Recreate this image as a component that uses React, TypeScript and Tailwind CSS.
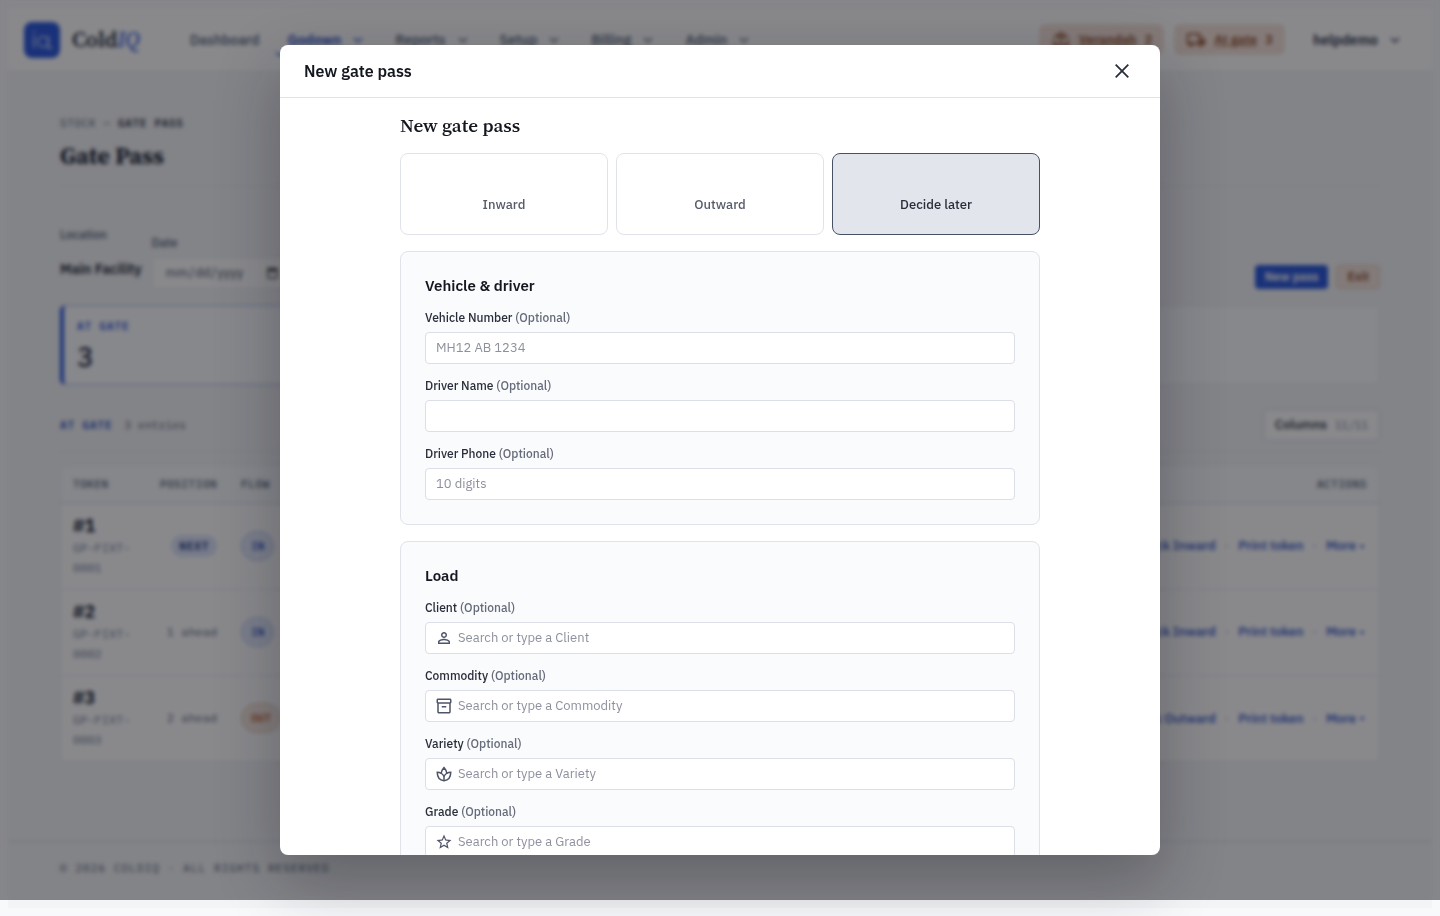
import type { ReactNode } from 'react';
import {
  MdKeyboardArrowDown,
  MdOutlineDeck,
  MdOutlineInventory2,
  MdOutlineLocalShipping,
  MdPersonOutline,
  MdStarBorder,
} from 'react-icons/md';

type Icon = (props: { className?: string }) => ReactNode;

const NAV = [
  { label: 'Dashboard' },
  { label: 'Godown', menu: true, active: true },
  { label: 'Reports', menu: true },
  { label: 'Setup', menu: true },
  { label: 'Billing', menu: true },
  { label: 'Admin', menu: true },
];

const ROWS = [
  { token: '#1', code: 'GP-FIXT-0001', position: 'NEXT', flow: 'IN' },
  { token: '#2', code: 'GP-FIXT-0002', position: '1 ahead', flow: 'IN' },
  { token: '#3', code: 'GP-FIXT-0003', position: '2 ahead', flow: 'OUT' },
];

const FLOWS = ['Inward', 'Outward', 'Decide later'];

const SERIF = "font-['Source_Serif_4','Liberation_Serif',serif]";
const MONO = "font-['IBM_Plex_Mono','Liberation_Mono',monospace]";

function LeafIcon({ className }: { className?: string }) {
  return (
    <svg viewBox="0 0 24 24" fill="none" stroke="currentColor" strokeWidth="2" strokeLinejoin="miter" className={className}>
      <path d="M12 3.500C9.800 5.800 8.600 8.300 8.300 11C9.800 12 11 13.200 12 15C13 13.200 14.200 12 15.700 11C15.400 8.300 14.200 5.800 12 3.500Z" />
      <path d="M8.300 11C6.700 10.100 5 9.700 3 9.600C3 15.600 6.200 20.200 12 21C17.800 20.200 21 15.600 21 9.600C19 9.700 17.300 10.100 15.700 11" />
      <path d="M12 14.500V21" />
    </svg>
  );
}

function NavBar() {
  return (
    <header className="flex h-16 items-center border-b border-slate-200 bg-white px-4">
      <a href="#home" className="flex items-center gap-3">
        <span className="flex size-9 items-center justify-center rounded-lg bg-[#1f4fd8]">
          <svg viewBox="0 0 24 24" className="size-7" fill="none" stroke="#c7d6fb" strokeWidth="1.3">
            <path d="M5 8v11M5 4v2" />
            <circle cx="13" cy="13.5" r="4.5" />
            <path d="M17.500 9v10H21" />
          </svg>
        </span>
        <span className={`${SERIF} text-[22px] font-semibold text-slate-900`}>
          Cold<em className="font-medium text-[#1f4fd8]">IQ</em>
        </span>
      </a>
      <nav className="ml-[38px] flex gap-1 text-sm font-medium">
        {NAV.map((item) => (
          <a
            key={item.label}
            href={`#${item.label.toLowerCase()}`}
            className={`flex items-center gap-2 rounded-md border-b-2 px-3 pt-1.5 pb-1 ${
              item.active ? 'border-[#1f4fd8] font-semibold text-[#1c47c0]' : 'border-transparent text-slate-600'
            }`}
          >
            {item.label}
            {item.menu && <MdKeyboardArrowDown className="size-[18px]" />}
          </a>
        ))}
      </nav>
      <div className="ml-auto flex items-center gap-[10px] text-[13px] font-semibold">
        <HeaderChip icon={MdOutlineDeck} label="Verandah" count={2} />
        <HeaderChip icon={MdOutlineLocalShipping} label="At gate" count={3} />
        <button className="flex items-center gap-2 pr-3 pl-[18px] text-sm text-slate-800">
          helpdemo
          <MdKeyboardArrowDown className="size-[18px]" />
        </button>
      </div>
    </header>
  );
}

function HeaderChip({ icon: Icon, label, count }: { icon: Icon; label: string; count: number }) {
  return (
    <a
      href={`#${label.toLowerCase()}`}
      className="flex h-[31px] items-center gap-2 rounded-md bg-[#f5e2d8] px-3 text-[#8a4520]"
    >
      <Icon className="size-5" />
      <span className="underline">{label}</span>
      <span>{count}</span>
    </a>
  );
}

function Toolbar() {
  return (
    <div className="flex items-end gap-[10px] pt-10">
      <div className="pb-[10px]">
        <div className="text-xs leading-4 font-medium text-slate-600">Location</div>
        <div className="mt-4 text-sm leading-5 font-semibold text-slate-900">Main Facility</div>
      </div>
      <div>
        <label htmlFor="date" className="block text-xs leading-4 font-medium text-slate-600">
          Date
        </label>
        <input
          id="date"
          type="date"
          className="mt-[6px] h-8 w-[142px] rounded border border-slate-200 bg-white px-3 text-[13px] text-slate-700"
        />
      </div>
      <div className="ml-auto flex gap-2 text-xs font-semibold">
        <button className="h-6 rounded bg-[#1f4fd8] px-[10px] text-white">New pass</button>
        <button className="h-6 rounded border border-[#dfc0ad] bg-[#f3e3da] px-[10px] text-[#8a4520]">Exit</button>
      </div>
    </div>
  );
}

function GateTable() {
  return (
    <div className="mt-3 overflow-hidden rounded-md border border-slate-200 bg-white">
      <table className="w-full">
        <thead>
          <tr className={`${MONO} h-[38px] border-b border-slate-300 bg-slate-50 text-[11px] tracking-wider text-slate-600`}>
            <th className="w-[87px] px-3 text-left font-medium">TOKEN</th>
            <th className="w-[81px] px-3 text-right font-medium">POSITION</th>
            <th className="px-3 text-left font-medium">FLOW</th>
            <th className="px-3 text-right font-medium">ACTIONS</th>
          </tr>
        </thead>
        <tbody>
          {ROWS.map((row) => (
            <tr key={row.token} className="h-[86px] border-b border-slate-200 last:border-b-0">
              <td className="px-3">
                <div className="text-lg leading-6 font-bold text-slate-900">{row.token}</div>
                <div className={`${MONO} w-[62px] text-xs leading-5 text-slate-500`}>{row.code}</div>
              </td>
              <td className={`${MONO} px-3 text-right text-xs whitespace-nowrap text-slate-600`}>
                {row.position === 'NEXT' ? (
                  <span className="rounded-full bg-[#dbe3f8] px-2 py-1 text-[11px] font-bold tracking-[0.08em] text-[#1e3a8a]">
                    NEXT
                  </span>
                ) : (
                  row.position
                )}
              </td>
              <td className={`${MONO} px-3`}>
                <span
                  className={`inline-flex h-[30px] items-center rounded-full border px-[9px] text-[11px] font-semibold ${
                    row.flow === 'IN'
                      ? 'border-[#b3c4f0] bg-[#e2e9fb] text-[#1c47c0]'
                      : 'border-[#e5c2ac] bg-[#f4e6de] text-[#b8582a]'
                  }`}
                >
                  {row.flow}
                </span>
              </td>
              <td className="pr-[15px] pl-3 text-[13px] font-medium">
                <div className="flex justify-end gap-[9px] text-[#1c47c0]">
                  <a href="#check">Check {row.flow === 'IN' ? 'Inward' : 'Outward'}</a>
                  <span className="text-slate-400">·</span>
                  <a href="#print">Print token</a>
                  <span className="text-slate-400">·</span>
                  <button className="flex items-center gap-1">
                    More <span className="text-[8px]">▾</span>
                  </button>
                </div>
              </td>
            </tr>
          ))}
        </tbody>
      </table>
    </div>
  );
}

function GatePassPage() {
  return (
    <div className="flex min-h-screen flex-col bg-[#f8f9fb] p-2">
      <div className="flex flex-1 flex-col bg-[#f3f4f6]">
        <NavBar />
        <main className="mx-auto w-full max-w-[1320px] flex-1 pt-[43px]">
          <div className={`${MONO} text-[11px] leading-4 tracking-[0.06em] text-slate-600`}>
            STOCK — <b className="font-semibold text-slate-800">GATE PASS</b>
          </div>
          <h1 className={`${SERIF} mt-[9px] border-b border-slate-200 pb-[14px] text-2xl leading-8 font-bold text-slate-900`}>
            Gate Pass
          </h1>
          <Toolbar />
          <div className="mt-4 grid grid-cols-4">
            <div className="h-20 rounded-md border border-l-4 border-[#a5b8ee] border-l-[#1f4fd8] bg-[#fbfcfe] pt-[10px] pl-[13px]">
              <div className={`${MONO} text-[11px] leading-5 font-semibold tracking-[0.08em] text-[#1f4fd8]`}>AT GATE</div>
              <div className="mt-[3px] text-[28px] leading-9 font-medium text-slate-800">3</div>
            </div>
            <div className="h-20 border border-slate-200 bg-[#fbfcfe]" />
            <div className="h-20 border border-slate-200 bg-[#fbfcfe]" />
            <div className="h-20 rounded-r-md border border-slate-200 bg-[#fbfcfe]" />
          </div>
          <div className={`${MONO} mt-6 flex items-center gap-3 border-b border-slate-200 pb-[10px] text-[11px]`}>
            <span className="font-semibold tracking-[0.08em] text-[#1c47c0]">AT GATE</span>
            <span className="tracking-wide text-slate-600">3 entries</span>
            <button className="ml-auto flex h-8 items-center gap-2 rounded border border-slate-300 bg-white px-[11px]">
              <span className="font-['IBM_Plex_Sans',Inter,sans-serif] text-[13px] font-medium text-slate-900">Columns</span>
              <span className="text-slate-500">11/11</span>
            </button>
          </div>
          <GateTable />
        </main>
        <footer className="h-[67px] border-t border-slate-300">
          <div className={`${MONO} mx-auto max-w-[1320px] pt-4 text-[11px] leading-5 tracking-widest text-slate-600`}>
            © 2026 COLDIQ · ALL RIGHTS RESERVED
          </div>
        </footer>
      </div>
    </div>
  );
}

function Section({ title, children }: { title: string; children: ReactNode }) {
  return (
    <section className="mt-4 flex flex-col gap-[14px] rounded-lg border border-[#e0e3ea] bg-[#fafbfd] p-6">
      <h3 className="text-[15px] leading-5 font-semibold text-[#14171f]">{title}</h3>
      {children}
    </section>
  );
}

function Field({ id, label, placeholder, icon: Icon }: { id: string; label: string; placeholder?: string; icon?: Icon }) {
  return (
    <div>
      <label htmlFor={id} className="block text-xs leading-4 font-medium text-[#2a2e3a]">
        {label} <span className="text-[#666b7a]">(Optional)</span>
      </label>
      <div className="mt-[6px] flex h-8 items-center gap-[5px] rounded border border-[#dcdfe7] bg-white px-[9px]">
        {Icon && <Icon className="size-[18px] shrink-0 text-[#4f5468]" />}
        <input
          id={id}
          type="text"
          placeholder={placeholder}
          className="w-full min-w-0 bg-transparent text-[13px] outline-none placeholder:text-[#8d919d] first:pl-px"
        />
      </div>
    </div>
  );
}

function NewGatePassDialog() {
  return (
    <div
      role="dialog"
      aria-modal="true"
      aria-labelledby="dialog-title"
      className="flex h-[90%] w-full max-w-[880px] flex-col overflow-hidden rounded-lg bg-white shadow-[0_24px_64px_rgba(15,20,30,0.3)]"
    >
      <div className="flex h-[53px] shrink-0 items-center justify-between border-b border-[#e0e3e8] px-6">
        <h2 id="dialog-title" className="text-base font-semibold text-[#14171f]">
          New gate pass
        </h2>
        <button aria-label="Close" className="flex size-7 items-center justify-center text-[#2a2e3a]">
          <svg viewBox="0 0 24 24" className="size-6" fill="none" stroke="currentColor" strokeWidth="1.8">
            <path d="M5.700 5.700 18.300 18.300M18.300 5.700 5.700 18.300" />
          </svg>
        </button>
      </div>
      <div className="flex-1 overflow-y-auto px-6 pt-[15px] pb-6 [scrollbar-width:none]">
        <div className="mx-auto max-w-[640px]">
          <h2 className={`${SERIF} mb-4 text-[19px] leading-6 font-semibold text-[#14171f]`}>New gate pass</h2>
          <div className="grid grid-cols-3 gap-2">
            {FLOWS.map((flow) => {
              const selected = flow === 'Decide later';
              return (
                <button
                  key={flow}
                  aria-pressed={selected}
                  className={`flex h-[82px] flex-col items-center justify-end rounded-lg border pb-[19px] text-[13px] leading-5 font-medium ${
                    selected ? 'border-[#475166] bg-[#e2e5ec] text-[#2a2e3a]' : 'border-[#e0e3ea] bg-white text-[#565c6b]'
                  }`}
                >
                  {flow}
                </button>
              );
            })}
          </div>
          <Section title="Vehicle & driver">
            <Field id="vehicle" label="Vehicle Number" placeholder="MH12 AB 1234" />
            <Field id="driver" label="Driver Name" />
            <Field id="phone" label="Driver Phone" placeholder="10 digits" />
          </Section>
          <Section title="Load">
            <Field id="client" label="Client" placeholder="Search or type a Client" icon={MdPersonOutline} />
            <Field id="commodity" label="Commodity" placeholder="Search or type a Commodity" icon={MdOutlineInventory2} />
            <Field id="variety" label="Variety" placeholder="Search or type a Variety" icon={LeafIcon} />
            <Field id="grade" label="Grade" placeholder="Search or type a Grade" icon={MdStarBorder} />
          </Section>
        </div>
      </div>
    </div>
  );
}

export default function App() {
  return (
    <div className="font-['IBM_Plex_Sans',Inter,sans-serif]">
      <GatePassPage />
      <div className="fixed inset-x-0 top-0 bottom-4 flex items-center justify-center bg-[#13141a]/50 backdrop-blur-[2px]">
        <NewGatePassDialog />
      </div>
    </div>
  );
}
